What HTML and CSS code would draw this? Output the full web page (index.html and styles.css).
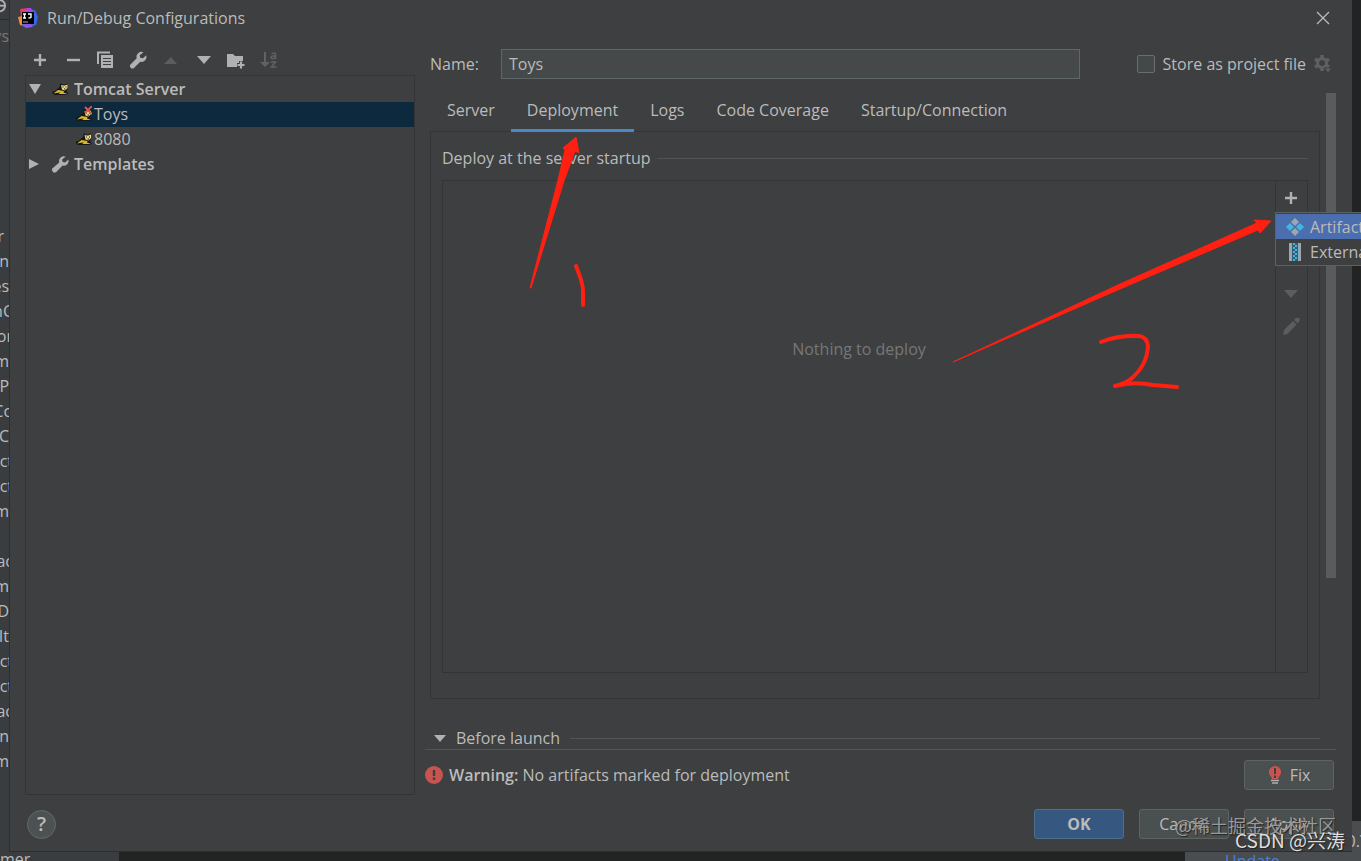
FILE: index.html
```html
<!DOCTYPE html>
<html lang="en">

<head>
    <meta charset="UTF-8">
    <title>Run/Debug Configurations</title>
    <link rel="stylesheet" href="styles.css">
</head>

<body>
    <!-- IDE window behind the dialog -->
    <div class="ide">
        <div class="ide-top">
            <svg width="14" height="20" viewBox="0 0 14 20"><circle cx="-1" cy="6" r="6" fill="none" stroke="#afb1b3" stroke-width="2"/><path d="M-7 6H5" stroke="#afb1b3" stroke-width="2"/></svg>
            <span class="crumb">ys</span>
        </div>
        <ul class="ide-tree">
            <li class="short">r</li>
            <li>in</li>
            <li>es</li>
            <li class="wide">nC</li>
            <li class="wide">or</li>
            <li>m</li>
            <li>P</li>
            <li class="wide">Co</li>
            <li>C</li>
            <li class="wide">ct</li>
            <li class="wide">ct</li>
            <li>m</li>
            <li></li>
            <li class="wide">ac</li>
            <li>m</li>
            <li>D</li>
            <li>It</li>
            <li class="wide">ct</li>
            <li class="wide">ct</li>
            <li class="wide">ac</li>
            <li>in</li>
            <li>m</li>
        </ul>
        <div class="ide-status">mer</div>
        <div class="ide-notice"><span class="version">0.<b>7</b></span><a href="#">Update</a></div>
    </div>

    <div class="dialog">
        <header class="titlebar">
            <svg width="20" height="20" viewBox="0 0 20 20">
                <path d="M2 1l8-1 4 4-3 9-8 5-2-5 2-4z" fill="#f0375f"/>
                <path d="M0 9l4-1 2 9-4 0z" fill="#f58a3c"/>
                <path d="M10 1l7 1 3 7-2 8-7 2-7-2z" fill="#3a66e8"/>
                <path d="M9 0l4 0 2 4-8 1z" fill="#a44be0"/>
                <path d="M3 17l9-2 3 4-7 1z" fill="#8b55e8"/>
                <rect x="4" y="4" width="12" height="12" fill="#000"/>
                <path d="M5 6h3M6.500 6v4M5 10h3M10 6h3v3q0 1-2.500 1" fill="none" stroke="#fff" stroke-width="1.400"/>
                <path d="M5 14h5" stroke="#aaa"/>
            </svg>
            <h1>Run/Debug Configurations</h1>
            <button class="icon-btn" aria-label="Close">
                <svg width="14" height="14" viewBox="0 0 14 14"><path d="M1 1l12 12M13 1L1 13" stroke="#bbb" stroke-width="1.300"/></svg>
            </button>
        </header>

        <main class="content">
            <section class="side">
                <div class="toolbar">
                    <button class="icon-btn" aria-label="Add"><svg width="20" height="20" viewBox="0 0 20 20"><path d="M10 4v12M4 10h12" stroke="#afb1b3" stroke-width="2.400"/></svg></button>
                    <button class="icon-btn" aria-label="Remove"><svg width="20" height="20" viewBox="0 0 20 20"><path d="M4 10h13" stroke="#afb1b3" stroke-width="2.400"/></svg></button>
                    <button class="icon-btn" aria-label="Copy"><svg width="20" height="20" viewBox="0 0 20 20"><path d="M3 14V2.500h12" fill="none" stroke="#afb1b3" stroke-width="2"/><path d="M6 5h12v13H6z" fill="#afb1b3"/><path d="M8 8.500h8M8 11.500h8M8 14.500h8" stroke="#3d3f40" stroke-width="1.200"/></svg></button>
                    <button class="icon-btn" aria-label="Edit templates"><svg width="20" height="20" viewBox="0 0 20 20"><path d="M15.500 2.300a5 5 0 0 0-6.800 6L2 15l0 2 1.500 1.500 2 0 6.700-6.800a5 5 0 0 0 6-6.500L15 8.300l-2.800-.5-.5-2.600z" fill="#afb1b3"/></svg></button>
                    <button class="icon-btn" aria-label="Move up" disabled><svg width="20" height="20" viewBox="0 0 20 20"><path d="M3 14l7-7 6 7z" fill="#5b5e60"/></svg></button>
                    <button class="icon-btn" aria-label="Move down"><svg width="20" height="20" viewBox="0 0 20 20"><path d="M3 6h14l-7 8z" fill="#afb1b3"/></svg></button>
                    <button class="icon-btn" aria-label="Create folder"><svg width="20" height="20" viewBox="0 0 20 20"><path d="M1 4h6l2 2h8v5h-4v2h-2v4H1z" fill="#afb1b3"/><path d="M15 11.500v7M11.500 15h7" stroke="#afb1b3" stroke-width="2.200"/></svg></button>
                    <button class="icon-btn" aria-label="Sort" disabled><svg width="20" height="20" viewBox="0 0 20 20"><path d="M6 2v11" stroke="#606365" stroke-width="2"/><path d="M1 12h10l-5 5z" fill="#606365"/><path d="M12.500 4q3-2 4 0v5M16 6q-4-.5-4 1.500t4 .5M12 12h4.500l-4 5h5" fill="none" stroke="#606365" stroke-width="1.500"/></svg></button>
                </div>
                <ul class="tree">
                    <li class="row">
                        <svg class="arrow" width="14" height="14" viewBox="0 0 14 14"><path d="M1 2h12L7 12z" fill="#afb1b3"/></svg>
                        <svg class="cat" width="16" height="14" viewBox="0 0 16 14"><use href="#cat"/></svg>
                        <b>Tomcat Server</b>
                    </li>
                    <li class="row child selected">
                        <svg width="16" height="16" viewBox="0 0 16 16"><use href="#cat" y="2"/><path d="M9 1l7 7M16 0l-7 7" stroke="#e05555" stroke-width="1.800"/></svg>
                        <span>Toys</span>
                    </li>
                    <li class="row child">
                        <svg width="16" height="14" viewBox="0 0 16 14">
                            <g id="cat">
                                <path d="M0 9l2 .5L7 5l1-4 2 1.500h3L15 1v6l-1 2 2 3-4 1H2l-2-1.500z" fill="#171717"/>
                                <path d="M8.500 3l2 .5h2L15 2.500v3.500l-2.500 2.500-3-1z" fill="#f0dc88"/>
                                <path d="M1 11.500L5.500 8l3 .5 3 .5-.5 1.500 4 1.500H6l2-1.500-3 .2z" fill="#d9b92a"/>
                                <path d="M10 5h1M13 5h1M11.500 7h1.500" stroke="#171717"/>
                            </g>
                        </svg>
                        <span>8080</span>
                    </li>
                    <li class="row">
                        <svg class="arrow" width="14" height="14" viewBox="0 0 14 14"><path d="M1 2l10 5-10 5z" fill="#afb1b3"/></svg>
                        <svg class="cat" width="18" height="18" viewBox="1 1 18 18"><path d="M15.500 2.300a5 5 0 0 0-6.800 6L1 15l0 2 1.500 2 2.500 0 7.200-7.300a5 5 0 0 0 6-6.500L15 8.300l-2.800-.5-.5-2.600z" fill="#afb1b3"/></svg>
                        <b>Templates</b>
                    </li>
                </ul>
            </section>

            <section class="editor">
                <div class="name-row">
                    <label class="name-label" for="name">Name:</label>
                    <input class="name-input" id="name" type="text" value="Toys">
                    <div class="store">
                        <input id="store" type="checkbox">
                        <label for="store">Store as project file</label>
                        <svg width="18" height="20" viewBox="0 0 18 20"><circle cx="8" cy="9" r="4.500" fill="none" stroke="#5e6163" stroke-width="3"/><path d="M8 1v3M8 14v3M1 5l3 1.700M12 11.300l3 1.700M1 13l3-1.700M12 6.700L15 5" stroke="#5e6163" stroke-width="3.500"/><path d="M10 14h8l-4 5z" fill="#5e6163" stroke="#3d3f40"/></svg>
                    </div>
                </div>

                <div class="scroll-area">
                    <div class="scroll-body">
                        <nav class="tabs">
                            <button class="tab">Server</button>
                            <button class="tab active">Deployment</button>
                            <button class="tab">Logs</button>
                            <button class="tab">Code Coverage</button>
                            <button class="tab">Startup/Connection</button>
                        </nav>
                        <div class="panel">
                            <h2 class="group-title">Deploy at the server startup</h2>
                            <div class="deploy">
                                <div class="deploy-list">Nothing to deploy</div>
                                <div class="deploy-tools">
                                    <button class="icon-btn" aria-label="Add artifact"><svg width="20" height="20" viewBox="0 0 20 20"><path d="M10 4v12M4 10h12" stroke="#afb1b3" stroke-width="2.400"/></svg></button>
                                    <button class="icon-btn" aria-label="Remove artifact" disabled></button>
                                    <button class="icon-btn" aria-label="Up" disabled></button>
                                    <button class="icon-btn" aria-label="Down" disabled><svg width="20" height="20" viewBox="0 0 20 20"><path d="M3 6h14l-7 8z" fill="#5b5e60"/></svg></button>
                                    <button class="icon-btn" aria-label="Edit" disabled><svg width="20" height="20" viewBox="0 0 20 20"><path d="M2 19l1-5L12 5l3.500 3.500-9 9.500zM13 4l2-2 3.500 0v3L16.500 7.500z" fill="#5b5e60"/></svg></button>
                                    <div class="popup">
                                        <a class="popup-item current" href="#">
                                            <svg width="18" height="18" viewBox="0 0 18 18"><path d="M9 0l4 4-4 4-4-4zM9 10l4 4-4 4-4-4z" fill="#9aa7b0"/><path d="M4 5l4 4-4 4-4-4zM14 5l4 4-4 4-4-4z" fill="#40b6e0"/></svg>
                                            Artifact...
                                        </a>
                                        <a class="popup-item" href="#">
                                            <svg width="18" height="18" viewBox="0 0 18 18"><path d="M3 0h3v18H3zM12 0h3v18h-3z" fill="#9aa7b0"/><path d="M6 0h6v18H6z" fill="#315e70"/><path d="M7 1h2M9 3h2M7 5h2M9 7h2M7 9h2M9 11h2M7 13h2M9 15h2M7 17h2" stroke="#40b6e0" stroke-width="2"/></svg>
                                            External Source...
                                        </a>
                                    </div>
                                </div>
                            </div>
                        </div>
                        <h2 class="group-title before">
                            <svg width="12" height="8" viewBox="0 0 12 8"><path d="M0 1h12L6 8z" fill="#afb1b3"/></svg>
                            Before launch
                        </h2>
                    </div>
                    <div class="scrollbar"></div>
                </div>

                <div class="warning">
                    <svg width="18" height="18" viewBox="0 0 18 18"><circle cx="9" cy="9" r="9" fill="#c75450"/><path d="M9 4v6M9 11.500v2.500" stroke="#3d3f40" stroke-width="2.400"/></svg>
                    <p><b>Warning:</b> No artifacts marked for deployment</p>
                    <button class="btn fix">
                        <svg width="14" height="20" viewBox="0 0 14 20"><path d="M7 1a6 6 0 0 1 4 10.500l-1 2.500H4l-1-2.500A6 6 0 0 1 7 1z" fill="#c75450"/><path d="M7 3v6M7 10.500V13" stroke="#3d3f40" stroke-width="2"/><path d="M3 15.500h8M4 18h6" stroke="#afb1b3" stroke-width="1.500"/></svg>
                        Fix
                    </button>
                </div>
            </section>
        </main>

        <footer class="footer">
            <button class="help" aria-label="Help">?</button>
            <button class="btn primary">OK</button>
            <button class="btn">Cancel</button>
            <button class="btn">Apply</button>
        </footer>
    </div>

    <!-- hand-drawn arrows -->
    <svg class="marks" width="1361" height="400" viewBox="0 0 1361 400">
        <g fill="#ff2012" stroke="#ff2012" stroke-linejoin="round">
            <path d="M530 288L558 180l7-30-2-2 13-11 3 16-4-2-11 30-33 107z"/>
            <path d="M953 362L1120 284l137-61-3-3 17 1-11 12-2-3-138 59-167 73z"/>
        </g>
        <g fill="none" stroke="#ff2012" stroke-width="4" stroke-linecap="round" stroke-linejoin="round">
            <path d="M576 266q7 17 7 25v14"/>
            <path d="M1101 342q18-7 38-6 8 1 9 10-1 19-16 32-5 5-17 8 18-5 38-1l24 2"/>
        </g>
    </svg>

    <div class="watermark juejin">@稀土掘金技术社区</div>
    <div class="watermark csdn">CSDN @兴涛</div>
</body>

</html>
```
FILE: styles.css
```css
* {
    box-sizing: border-box;
}

body {
    margin: 0;
    height: 100vh;
    position: relative;
    overflow: hidden;
    background: #222323;
    color: #bbb;
    font: 16px/24px "Open Sans", "Noto Sans CJK SC", sans-serif;
}

h1,
h2,
p,
ul {
    margin: 0;
    padding: 0;
    font-size: 16px;
    font-weight: normal;
    list-style: none;
}

b {
    font-weight: 600;
}

button,
input {
    margin: 0;
    color: inherit;
    font: inherit;
}

svg {
    display: block;
    flex: none;
}

/* window behind */
.ide-top,
.ide-tree {
    width: 14px;
    background: #3a3d3f;
    overflow: hidden;
}

.ide-top {
    height: 224px;
}

.ide-top svg {
    border-bottom: 1px solid #2b2b2b;
}

.crumb {
    display: flex;
    justify-content: flex-end;
    padding: 4px 5px 0 0;
    color: #777;
}

.ide-tree {
    height: calc(100vh - 224px);
}

.ide-tree li {
    display: flex;
    justify-content: flex-end;
    height: 25px;
    padding-right: 5px;
}

.ide-tree .short {
    padding-right: 10px;
}

.ide-tree .wide {
    padding-right: 1px;
}

.ide-status {
    position: absolute;
    left: 0;
    bottom: 0;
    width: 119px;
    height: 10px;
    line-height: 16px;
    overflow: hidden;
    background: #3a3d3f;
}

.ide-notice {
    position: absolute;
    right: 0;
    bottom: 0;
    display: flex;
    flex-direction: column;
    width: 176px;
    height: 40px;
    overflow: hidden;
    background: #4a4d4f;
}

.ide-notice a {
    padding-left: 40px;
    color: #4a80d8;
    text-decoration: none;
}

.version {
    align-self: flex-end;
    height: 28px;
    margin-right: -8px;
    line-height: 40px;
}

/* dialog */
.dialog {
    position: absolute;
    top: 0;
    right: 9px;
    bottom: 9px;
    left: 9px;
    display: flex;
    flex-direction: column;
    padding: 0 16px 0 15px;
    background: #3d3f40;
    border: solid #2c2e2f;
    border-width: 0 0 1px 1px;
}

.titlebar {
    display: flex;
    align-items: center;
    gap: 9px;
    height: 36px;
    margin-left: -7px;
    padding-right: 6px;
}

.titlebar h1 {
    flex: 1;
}

.icon-btn {
    display: flex;
    align-items: center;
    justify-content: center;
    padding: 0;
    border: 0;
    background: none;
}

.content {
    flex: 1;
    display: grid;
    grid-template-columns: 390px 1fr;
    gap: 10px;
    min-height: 0;
}

.side {
    display: flex;
    flex-direction: column;
}

.toolbar {
    display: flex;
    justify-content: space-between;
    height: 39px;
    padding: 14px 136px 0 5px;
}

.toolbar .icon-btn {
    width: 20px;
    height: 20px;
}

.tree {
    flex: 1;
    padding-top: 1px;
    border: 1px solid #323435;
}

.row {
    display: flex;
    align-items: center;
    height: 25px;
    padding: 0 0 2px 2px;
}

.row .arrow {
    margin-right: 10px;
}

.row .cat {
    width: 17px;
    margin-right: 5px;
}

.child {
    gap: 2px;
    padding-left: 50px;
}

.selected {
    background: #0d293e;
}

.editor {
    display: flex;
    flex-direction: column;
    min-width: 0;
    padding-top: 13px;
}

.name-row {
    display: flex;
    align-items: center;
    height: 30px;
    padding: 0 4px 0 5px;
}

.name-label {
    width: 71px;
}

.name-input {
    flex: 1;
    min-width: 0;
    height: 30px;
    padding: 0 7px;
    border: 1px solid #5d6767;
    background: #45494a;
    outline: 0;
}

.store {
    display: flex;
    align-items: center;
    gap: 8px;
    margin-left: 57px;
}

.store input {
    appearance: none;
    width: 18px;
    height: 18px;
    border: 1px solid #6b6e6f;
    border-radius: 2px;
    background: #43494a;
}

.scroll-area {
    flex: 1;
    display: flex;
    gap: 6px;
    min-height: 0;
    margin-top: 14px;
}

.scroll-body {
    flex: 1;
    display: flex;
    flex-direction: column;
    padding-left: 5px;
}

.scrollbar {
    width: 10px;
    height: 74%;
    background: #595b5c;
}

.tabs {
    display: flex;
    height: 39px;
    padding-left: 1px;
    margin-bottom: -1px;
    z-index: 1;
}

.tab {
    padding: 0 16px 2px;
    border: solid transparent;
    border-width: 0 0 3px;
    background: none;
}

.active {
    border-color: #4a88c7;
}

.panel {
    flex: 1;
    display: flex;
    flex-direction: column;
    padding: 14px 11px 25px;
    border: 1px solid #323435;
}

.group-title {
    display: flex;
    align-items: center;
    gap: 6px;
}

.group-title::after {
    content: "";
    flex: 1;
    height: 1px;
    background: #515455;
}

.deploy {
    flex: 1;
    display: flex;
    margin-top: 10px;
    border: 1px solid #323435;
}

.deploy-list {
    flex: 1;
    padding-top: 156px;
    text-align: center;
    color: #777;
}

.deploy-tools {
    position: relative;
    width: 32px;
    padding-top: 1px;
    border-left: 1px solid #323435;
}

.deploy-tools .icon-btn {
    width: 30px;
    height: 32px;
}

.popup {
    position: absolute;
    top: 31px;
    left: -1px;
    width: 180px;
    padding: 1px 0;
    border: 1px solid #5e6162;
    background: #3d3f40;
    z-index: 2;
}

.popup-item {
    display: flex;
    align-items: center;
    gap: 6px;
    height: 25px;
    padding-left: 10px;
    color: inherit;
    text-decoration: none;
    white-space: nowrap;
}

.current {
    background: #4b6eaf;
}

.before {
    gap: 10px;
    margin-top: 28px;
    padding-left: 4px;
    line-height: 22px;
}

.warning {
    display: flex;
    align-items: center;
    gap: 6px;
    height: 46px;
    padding: 5px 2px 0 0;
    border-top: 1px solid #515455;
}

.warning p {
    flex: 1;
}

.btn {
    display: flex;
    align-items: center;
    justify-content: center;
    width: 90px;
    height: 30px;
    padding: 0;
    border: 1px solid #5e6364;
    border-radius: 3px;
    background: #4a4f50;
}

.primary {
    border-color: #4c708c;
    background: #365880;
    font-weight: 700;
}

.fix {
    gap: 8px;
}

.footer {
    display: flex;
    align-items: center;
    gap: 15px;
    height: 56px;
    padding: 2px 2px 0 2px;
}

.help {
    width: 29px;
    height: 29px;
    margin-right: auto;
    padding: 0;
    border: 1px solid #646a6b;
    border-radius: 50%;
    background: #4c5152;
    font-size: 20px;
    font-weight: 600;
}

.marks {
    position: absolute;
    top: 0;
    left: 0;
    pointer-events: none;
    z-index: 3;
}

.watermark {
    position: absolute;
    font-family: "Noto Sans CJK SC", sans-serif;
    text-shadow: 1px 1px 1px #222;
    z-index: 4;
}

.juejin {
    right: 25px;
    bottom: 24px;
    font-size: 18px;
    color: #999;
}

.csdn {
    right: 16px;
    bottom: 9px;
    font-size: 19px;
    color: #ddd;
}
```
